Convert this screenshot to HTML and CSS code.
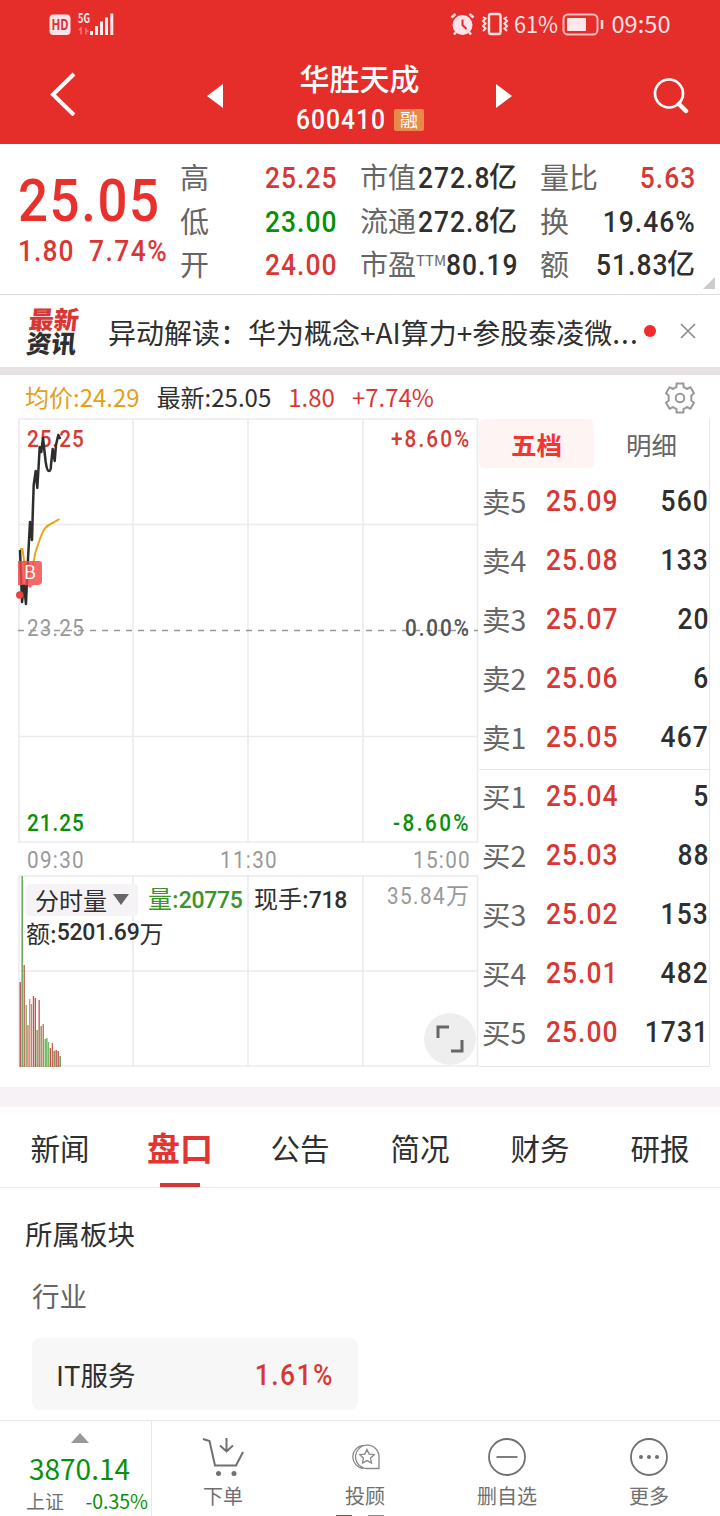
FILE: index.html
```html
<!DOCTYPE html>
<html lang="zh-CN">
  <head>
    <meta charset="UTF-8" />
    <meta name="viewport" content="width=device-width, initial-scale=1.0" />
    <title>华胜天成 600410</title>
    <link rel="stylesheet" href="styles.css">
  </head>
  <body>
    <header class="header">
      <div class="status">
        <svg class="status-left" width="70" height="48" viewBox="48 0 70 48">
          <rect x="49.500" y="14.500" width="21" height="20.500" rx="4" fill="#ffe3e5" />
          <text x="51.500" y="30" font-size="14" font-weight="700" textLength="17" lengthAdjust="spacingAndGlyphs" fill="#d7303a">HD</text>
          <text x="78" y="23" font-size="13" font-weight="700" textLength="12" lengthAdjust="spacingAndGlyphs" fill="#ffe9ea">5G</text>
          <path d="M79 30l2-2v6.500M86 28v6.500M88.500 31h-2.500" fill="none" stroke="#f27878" stroke-width="1.500" />
          <path d="M91.500 31v4M96.500 26v9M101.500 21.500v13.500M106.500 17.500v17.500M111.800 13.500v21.500" stroke="#ffecec" stroke-width="3" />
        </svg>
        <svg class="status-right" width="225" height="48" viewBox="448 0 225 48">
          <g stroke="#ffe3e6" fill="none" stroke-width="2">
            <circle cx="462.500" cy="25" r="9" fill="#ffe3e6" />
            <path d="M451.500 17.500l4-3.500M473.500 17.500l-4-3.500M456 32l-2 2.500M469 32l2 2.500" stroke-width="2.500" />
            <path d="M462.500 19.500v5.500l4 4" stroke="#e52d2c" />
            <rect x="489" y="14" width="11.500" height="20" rx="2" stroke-width="2.400" />
            <path d="M483 17l2.500 1.500-2.500 2.500 2.500 2.500-2.500 2.500 2.500 2.500-2.500 2.500M507 17l-2.500 1.500 2.500 2.500-2.500 2.500 2.500 2.500-2.500 2.500 2.500 2.500" stroke-width="2" />
            <rect x="563.500" y="14.500" width="34" height="20" rx="4.500" stroke="#f9bcbe" />
            <rect x="567" y="18" width="19" height="13" rx="1" fill="#ffe6e8" stroke="none" />
            <path d="M602 20v9" stroke-width="2.500" />
          </g>
          <text x="514" y="33" font-size="23.500" textLength="44" lengthAdjust="spacingAndGlyphs" fill="#ffe3e6">61%</text>
          <text x="611.500" y="33" font-size="23.500" textLength="59" lengthAdjust="spacingAndGlyphs" fill="#ffe3e6">09:50</text>
        </svg>
      </div>
      <div class="nav">
        <svg class="back" width="30" height="44" viewBox="0 0 30 44"><path d="M24 2L3 22.500 24 43" fill="none" stroke="#fff" stroke-width="4" /></svg>
        <svg class="prev" width="16" height="24" viewBox="0 0 16 24"><path d="M0 12L16 0v24z" fill="#fff" /></svg>
        <div class="title">
          <h1>华胜天成</h1>
          <div class="code"><span class="num">600410</span><span class="tag">融</span></div>
        </div>
        <svg class="next" width="16" height="24" viewBox="0 0 16 24"><path d="M16 12L0 0v24z" fill="#fff" /></svg>
        <svg class="search" width="38" height="38" viewBox="0 0 38 38"><circle cx="18" cy="16.500" r="14" fill="none" stroke="#fff" stroke-width="2.700" /><path d="M28 27l7 7" stroke="#fff" stroke-width="4.500" stroke-linecap="round" /></svg>
      </div>
    </header>

    <section class="quote">
      <div class="price">
        <div class="price-now"><span class="num">25.05</span></div>
        <div class="price-diff"><span class="num">1.80</span><span class="num">7.74%</span></div>
      </div>
      <dl class="col col-a">
        <dt>高</dt><dd class="red"><span class="num">25.25</span></dd>
        <dt>低</dt><dd class="green"><span class="num">23.00</span></dd>
        <dt>开</dt><dd class="red"><span class="num">24.00</span></dd>
      </dl>
      <dl class="col col-b">
        <dt>市值</dt><dd><span class="num">272.8</span><i>亿</i></dd>
        <dt>流通</dt><dd><span class="num">272.8</span><i>亿</i></dd>
        <dt>市盈<sup>TTM</sup></dt><dd><span class="num">80.19</span></dd>
      </dl>
      <dl class="col col-c">
        <dt>量比</dt><dd class="red"><span class="num">5.63</span></dd>
        <dt>换</dt><dd><span class="num">19.46%</span></dd>
        <dt>额</dt><dd><span class="num">51.83</span><i>亿</i></dd>
      </dl>
      <span class="corner"></span>
    </section>

    <section class="news">
      <div class="news-logo"><span class="red">最新</span><span>资讯</span></div>
      <p class="news-text">异动解读：华为概念+AI算力+参股泰凌微<span>...</span></p>
      <span class="dot"></span>
      <svg class="close" width="16" height="16" viewBox="0 0 16 16"><path d="M1 1l14 14M15 1L1 15" stroke="#8d8d8d" stroke-width="1.700" /></svg>
    </section>

    <section class="trade">
      <div class="info">
        <span class="orange">均价:24.29</span>
        <span>最新:25.05</span>
        <span class="red">1.80</span>
        <span class="red">+7.74%</span>
        <svg class="gear" width="32" height="32" viewBox="0 0 32 32" fill="none" stroke="#999" stroke-width="2" stroke-linejoin="round">
          <path d="M12.500 1.500h7v3.500q2 .7 3.500 2l3.500-1.800 3.500 6-2.700 2.300v5l2.700 2.300-3.500 6-3.500-1.800q-1.500 1.300-3.500 2v3.500h-7v-3.500q-2-.7-3.500-2l-3.500 1.800-3.500-6 2.700-2.300v-5l-2.700-2.300 3.500-6 3.500 1.800q1.500-1.300 3.500-2z" />
          <circle cx="16" cy="16" r="4.300" />
        </svg>
      </div>
      <div class="board">
        <div class="chart">
          <svg width="479" height="652" viewBox="0 417 479 652">
            <path d="M18 419H478M18 524.500H478M18 736.500H478M18 842H478M19 419V843M133 419V842M248 419V842M363 419V842M477.500 419V843M18 876H478M18 971H478M18 1066H478M19 876V1066M133 876V1066M248 876V1066M363 876V1066M477.500 876V1066" fill="none" stroke="#ebebeb" stroke-width="1.600" />
            <path d="M18 630.500H478" stroke="#999" stroke-width="1.500" stroke-dasharray="6 6" />
            <g class="axis">
              <text x="27" y="447" textLength="63" fill="#d63a35">25.25</text>
              <text x="391" y="447" textLength="87" fill="#d63a35">+8.60%</text>
              <text x="27" y="636" textLength="63" fill="#999">23.25</text>
              <text x="405" y="636" textLength="71" fill="#555">0.00%</text>
              <text x="27" y="831" textLength="63" fill="#0a8f0a">21.25</text>
              <text x="393" y="831" textLength="84" fill="#0a8f0a">-8.60%</text>
              <text x="27" y="868" textLength="63" fill="#999">09:30</text>
              <text x="220" y="868" textLength="63" fill="#999">11:30</text>
              <text x="413" y="868" textLength="63" fill="#999">15:00</text>
              <text x="387" y="904" textLength="64" fill="#999">35.84</text>
            </g>
            <text class="unit" x="446" y="904" fill="#999">万</text>
            <path d="M20 549h2.500l4 30 6-12 3-15c3-8 5-17 9-23q3-4 8-6l7-4" fill="none" stroke="#e8a420" stroke-width="2" />
            <path d="M20 550L21 575 22 602 24 585 26 604 27.300 572 30 522 32 540 32.700 515 33.700 485 35.700 471 37.300 488 38.700 465 39.700 447 41.300 452 43 438 45.700 462Q47 471 49 471T51 465L52.700 449 54.700 461 56 445 58.300 435 60.300 439" fill="none" stroke="#2d2d2d" stroke-width="2.500" stroke-linejoin="round" />
            <path d="M21 561h18q3 0 3 3v18q0 2-3 3h-6l-3 3-3-3h-9v-24z" fill="#f04848" fill-opacity=".82" />
            <text class="mark" x="24" y="579">B</text>
            <circle cx="19.800" cy="595" r="3.800" fill="#e94343" />
            <g id="volume"></g>
          </svg>
          <div class="legend">
            <div class="legend-row"><span class="select">分时量<b></b></span><span class="lime">量:<em>20775</em></span><span>现手:<em>718</em></span></div>
            <div class="legend-row">额:<em>5201.69</em>万</div>
          </div>
          <button class="expand">
            <svg width="28" height="28" viewBox="0 0 28 28"><path d="M2 13V2h11M26 15v11H15" fill="none" stroke="#666" stroke-width="3" /></svg>
          </button>
        </div>
        <div class="book">
          <div class="book-tabs"><span class="on">五档</span><span>明细</span></div>
          <ul class="levels">
            <li><span>卖5</span><b class="num">25.09</b><em class="num">560</em></li>
            <li><span>卖4</span><b class="num">25.08</b><em class="num">133</em></li>
            <li><span>卖3</span><b class="num">25.07</b><em class="num">20</em></li>
            <li><span>卖2</span><b class="num">25.06</b><em class="num">6</em></li>
            <li><span>卖1</span><b class="num">25.05</b><em class="num">467</em></li>
            <li class="buy-first"><span>买1</span><b class="num">25.04</b><em class="num">5</em></li>
            <li><span>买2</span><b class="num">25.03</b><em class="num">88</em></li>
            <li><span>买3</span><b class="num">25.02</b><em class="num">153</em></li>
            <li><span>买4</span><b class="num">25.01</b><em class="num">482</em></li>
            <li><span>买5</span><b class="num">25.00</b><em class="num">1731</em></li>
          </ul>
        </div>
      </div>
    </section>

    <nav class="tabs">
      <span>新闻</span><span class="active">盘口</span><span>公告</span><span>简况</span><span>财务</span><span>研报</span>
    </nav>

    <section class="sector">
      <h2>所属板块</h2>
      <h3>行业</h3>
      <div class="card"><span>IT服务</span><span class="num red">1.61%</span></div>
    </section>

    <footer class="footer">
      <div class="index">
        <i class="up"></i>
        <div class="index-value">3870.14</div>
        <div class="index-row"><span>上证</span><span class="index-rate">-0.35%</span></div>
      </div>
      <div class="action">
        <svg width="44" height="44" viewBox="0 0 44 44" fill="none" stroke="#707070" stroke-width="2"><path d="M2 4l6.500 2L14 30.500h21L42 17M25.500 3v13M19 10.500l6.500 6 6.500-6" /><circle cx="17.500" cy="38.500" r="2.500" fill="#707070" stroke="none" /><circle cx="33" cy="38.500" r="2.500" fill="#707070" stroke="none" /></svg>
        <span>下单</span>
      </div>
      <div class="action advisor">
        <svg width="44" height="44" viewBox="0 0 44 44" fill="none" stroke="#888" stroke-width="1.300"><path d="M36 33.500H24.500a11.700 11.700 0 1 1 11.500-11.700zM20 10.300a11.700 11.700 0 0 0 0 23.200" /><path d="M24 14.500l2.200 4.600 5 .6-3.700 3.400 1 5-4.500-2.500-4.500 2.500 1-5-3.700-3.400 5-.6z" /></svg>
        <span>投顾</span>
      </div>
      <div class="action">
        <svg width="44" height="44" viewBox="0 0 44 44" fill="none" stroke="#707070" stroke-width="1.800"><circle cx="22" cy="22" r="18" /><path d="M11.500 22h21" /></svg>
        <span>删自选</span>
      </div>
      <div class="action">
        <svg width="44" height="44" viewBox="0 0 44 44" fill="none" stroke="#707070" stroke-width="1.800"><circle cx="22" cy="22" r="18" /><g fill="#707070" stroke="none"><circle cx="14" cy="22" r="2" /><circle cx="22" cy="22" r="2" /><circle cx="30" cy="22" r="2" /></g></svg>
        <span>更多</span>
      </div>
    </footer>

    <script>
      const volume = document.querySelector("#volume");
      // [x, height, width, color]
      const bars = [
        [20, 85, 1.4, "#b94f4f"], [22, 191, 1.3, "#4f9a3c"], [24, 102, 1.4, "#c0615a"],
        [26, 62, 1.4, "#86a868"], [27.5, 42, 1.8, "#ea8f88"], [29.500, 68, 1.4, "#dc8f86"],
        [31.300, 63, 1.3, "#a59558"], [33.300, 71, 1.3, "#c9504e"], [35.200, 69, 1.3, "#c9504e"],
        [37, 37, 1.3, "#6d9a3a"], [39, 67, 1.3, "#c9504e"], [41, 41, 1.3, "#5f9a42"],
        [43, 43, 1.5, "#dc706a"], [45, 28, 1.5, "#76bd6c"], [46.500, 29, 1.6, "#76bd6c"],
        [48.300, 25, 1.4, "#76bd6c"], [50.200, 19, 1.3, "#b8544a"], [52.200, 24, 1.3, "#d95d58"],
        [54, 16, 1.3, "#4f8a34"], [56, 17, 1.3, "#b8443e"], [58, 16, 1.3, "#b8443e"], [60, 11, 1.3, "#5a8a38"]
      ];

      bars.forEach(([x, height, width, color]) => {
        const bar = document.createElementNS("http://www.w3.org/2000/svg", "rect");
        bar.setAttribute("x", x - 0.5);
        bar.setAttribute("y", 1067 - height);
        bar.setAttribute("width", width);
        bar.setAttribute("height", height);
        bar.setAttribute("fill", color);
        volume.appendChild(bar);
      });
    </script>
  </body>
</html>
```
FILE: styles.css
```css
* {
  box-sizing: border-box;
  margin: 0;
  padding: 0;
}
body {
  width: 720px;
  height: 1516px;
  overflow: hidden;
  background: #fff;
  color: #2f2f2f;
  font-family: "Noto Sans CJK SC", sans-serif;
}
svg {
  display: block;
  flex: none;
}
i, em {
  font-style: normal;
}
/* narrow, widely spaced figures */
.num {
  display: inline-block;
  margin-right: -.04em;
  font-family: Roboto, "Noto Sans CJK SC", sans-serif;
  font-weight: 500;
  letter-spacing: .04em;
  transform: scaleX(.88);
  transform-origin: left;
}
.col .num, .levels em.num, .card .num {
  transform-origin: right;
}
.red {
  color: #d83835;
}
.green {
  color: #0a8f0a;
}
.orange {
  color: #e59f18;
}
.lime {
  color: #3b9428;
}

/* header */
.header {
  height: 144px;
  background: #e52d2a;
  color: #fff;
}
.status {
  display: flex;
  justify-content: space-between;
  height: 48px;
  padding: 0 47px 0 48px;
}
.status text {
  font-family: "Noto Sans CJK SC", sans-serif;
}
.nav {
  display: flex;
  align-items: center;
  height: 96px;
  padding: 0 31px 0 50px;
}
.back {
  margin-top: -4px;
}
.prev {
  margin-left: 127px;
}
.title {
  width: 272px;
  height: 96px;
  padding-top: 9px;
  text-align: center;
}
.title h1 {
  padding-left: 1px;
  font-size: 30px;
  font-weight: 500;
  line-height: 41px;
}
.code {
  display: flex;
  align-items: center;
  height: 43px;
  padding-left: 73px;
  font-size: 28px;
}
.code .num {
  width: 98px;
  margin: 0;
  text-align: left;
}
.tag {
  width: 30px;
  height: 22px;
  border-radius: 2px;
  background: #e8894a;
  font-size: 18px;
  line-height: 21px;
}
.next {
  margin-left: 1px;
}
.search {
  margin-left: auto;
}

/* quote */
.quote {
  position: relative;
  display: flex;
  height: 151px;
  padding-top: 12px;
  border-bottom: 1px solid #ddd;
}
.price {
  width: 180px;
  padding-left: 18px;
  white-space: nowrap;
}
.price-now {
  height: 76px;
  color: #e8302c;
  font-size: 60px;
  line-height: 78px;
}
.price-now .num {
  letter-spacing: .03em;
}
.price-diff {
  display: flex;
  color: #d83835;
  font-size: 30px;
  line-height: 38px;
}
.price-diff .num {
  width: 71px;
  margin: 0;
}
.price-diff .num:last-child {
  letter-spacing: .055em;
}
.col {
  display: grid;
  grid-template-columns: auto minmax(0, 1fr);
  grid-auto-rows: 43.500px;
  line-height: 43.500px;
  white-space: nowrap;
}
.col dt {
  margin-top: -1px;
  color: #666;
  font-size: 29px;
}
.col dd {
  display: flex;
  align-items: flex-start;
  justify-content: flex-end;
  font-size: 30px;
}
.col i {
  margin-top: -2px;
  font-size: 28px;
  font-weight: 500;
}
.col-a {
  width: 156px;
}
.col-b {
  width: 157px;
  margin-left: 24px;
}
.col-b dt {
  width: 56px;
  font-size: 28px;
}
.col-b sup {
  font-size: 15px;
  line-height: 0;
  vertical-align: 9px;
}
.col-c {
  width: 155px;
  margin-left: 23px;
}
.corner {
  position: absolute;
  right: 5px;
  bottom: 5px;
  border-bottom: 12px solid #ccc;
  border-left: 12px solid transparent;
}

/* news */
.news {
  display: flex;
  align-items: center;
  height: 80px;
  padding-left: 28px;
  border-bottom: 8px solid #e7e1e4;
}
.news-logo {
  display: flex;
  flex-direction: column;
  width: 80px;
  margin-top: -3px;
  font-size: 25px;
  font-weight: 900;
  line-height: 24px;
  transform: skewX(-6deg);
}
.news-text {
  width: 531px;
  padding-top: 1px;
  font-size: 28px;
  line-height: 40px;
  white-space: nowrap;
}
.news-text span {
  letter-spacing: 1px;
}
.dot {
  width: 12px;
  height: 12px;
  margin-left: 5px;
  border-radius: 50%;
  background: #ee2c2c;
}
.close {
  margin-left: 24px;
}

/* chart and order book */
.info {
  display: flex;
  height: 42px;
  padding: 3px 24px 0 25px;
  font-size: 24px;
  line-height: 37px;
}
.info span {
  margin-right: 17px;
}
.gear {
  margin: 4px 0 0 auto;
}
.board {
  display: flex;
  height: 690px;
  border-bottom: 20px solid #f7f2f6;
}
.chart {
  position: relative;
  width: 479px;
}
.axis text {
  font-family: Roboto, "Noto Sans CJK SC", sans-serif;
  font-size: 23px;
  font-weight: 500;
  transform: scaleX(.9);
  transform-box: fill-box;
  transform-origin: left;
}
.axis text[fill="#999"] {
  font-weight: 400;
}
.unit {
  font-size: 23px;
}
.mark {
  fill: #fff;
  font-size: 18px;
}
.legend {
  position: absolute;
  top: 466px;
  left: 26px;
  font-size: 24px;
  line-height: 32px;
  white-space: nowrap;
}
.legend em {
  font-family: Roboto, sans-serif;
  font-size: 23px;
  font-weight: 500;
  letter-spacing: -.3px;
}
.legend-row {
  display: flex;
  align-items: center;
  height: 33px;
}
.select {
  display: flex;
  align-items: center;
  gap: 6px;
  width: 112px;
  padding-left: 9px;
  border-radius: 4px;
  background: #f6f3f6;
}
.select b {
  border-top: 11px solid #666;
  border-right: 8px solid transparent;
  border-left: 8px solid transparent;
}
.legend .lime {
  width: 106px;
  margin-left: 10px;
}
.expand {
  position: absolute;
  top: 596px;
  left: 424px;
  display: flex;
  align-items: center;
  justify-content: center;
  width: 52px;
  height: 52px;
  border: 0;
  border-radius: 50%;
  background: #eee;
}
.book {
  width: 231px;
  height: 648px;
  margin-top: 2px;
  border-right: 1px solid #e8e8e8;
  border-bottom: 1px solid #e8e8e8;
}
.book-tabs {
  display: flex;
  height: 49px;
  color: #666;
  font-size: 25.500px;
  line-height: 49px;
  text-align: center;
}
.book-tabs span {
  width: 115px;
}
.book-tabs .on {
  border-radius: 5px;
  background: #fff4f4;
  color: #f2352f;
  font-weight: 700;
}
.levels {
  padding-top: 6px;
  list-style: none;
}
.levels li {
  display: flex;
  height: 59px;
  padding: 0 1px 0 3px;
  font-size: 30px;
  line-height: 54px;
}
.levels .buy-first {
  box-shadow: inset 0 1px #e8e8e8;
}
.levels span {
  width: 64px;
  color: #666;
  font-size: 28.500px;
  line-height: 53px;
}
.levels b {
  color: #d83835;
}
.levels em {
  margin-left: auto;
}

/* tabs */
.tabs {
  display: flex;
  height: 81px;
  border-bottom: 1px solid #eaeaea;
  font-size: 29.500px;
  line-height: 80px;
  text-align: center;
}
.tabs span {
  width: 120px;
}
.tabs .active {
  color: #e23531;
  font-size: 33px;
  font-weight: 700;
  background: linear-gradient(#d83835, #d83835) center bottom / 40px 4px no-repeat;
}

/* sector */
.sector {
  height: 232px;
  padding: 23px 25px 0;
}
.sector h2 {
  font-size: 27.500px;
  font-weight: 400;
  line-height: 44px;
}
.sector h3 {
  margin: 18px 0 21px 7px;
  color: #666;
  font-size: 27.500px;
  font-weight: 400;
  line-height: 44px;
}
.card {
  display: flex;
  justify-content: space-between;
  width: 326px;
  height: 72px;
  margin-left: 7px;
  padding: 0 25px 0 24px;
  border-radius: 8px;
  background: #f7f7f7;
  font-size: 27.500px;
  line-height: 73px;
}
.card .num {
  font-size: 30px;
  letter-spacing: .055em;
}

/* footer */
.footer {
  display: flex;
  height: 96px;
  border-top: 1px solid #e8e8e8;
  color: #707070;
}
.index {
  width: 152px;
  padding-top: 12px;
  border-right: 1px solid #e8e8e8;
  white-space: nowrap;
}
.up {
  display: block;
  width: 0;
  margin-left: 71px;
  border-right: 9px solid transparent;
  border-bottom: 10px solid #999;
  border-left: 9px solid transparent;
}
.index-value {
  padding-left: 29px;
  color: #0a8f0a;
  font-size: 28px;
  line-height: 50px;
}
.index-row {
  display: flex;
  justify-content: space-between;
  margin-top: -6px;
  padding: 0 3px 0 26px;
  font-size: 19px;
  line-height: 28px;
}
.index-rate {
  color: #0a8f0a;
  font-size: 19.500px;
}
.action {
  display: flex;
  flex-direction: column;
  align-items: center;
  width: 142px;
  padding-top: 14px;
  font-size: 20px;
}
.action span {
  line-height: 34px;
}
.advisor {
  background:
    linear-gradient(#c82c42, #c82c42) 42px bottom / 16px 1px no-repeat,
    linear-gradient(#888, #888) 74px bottom / 16px 1px no-repeat;
}
```
